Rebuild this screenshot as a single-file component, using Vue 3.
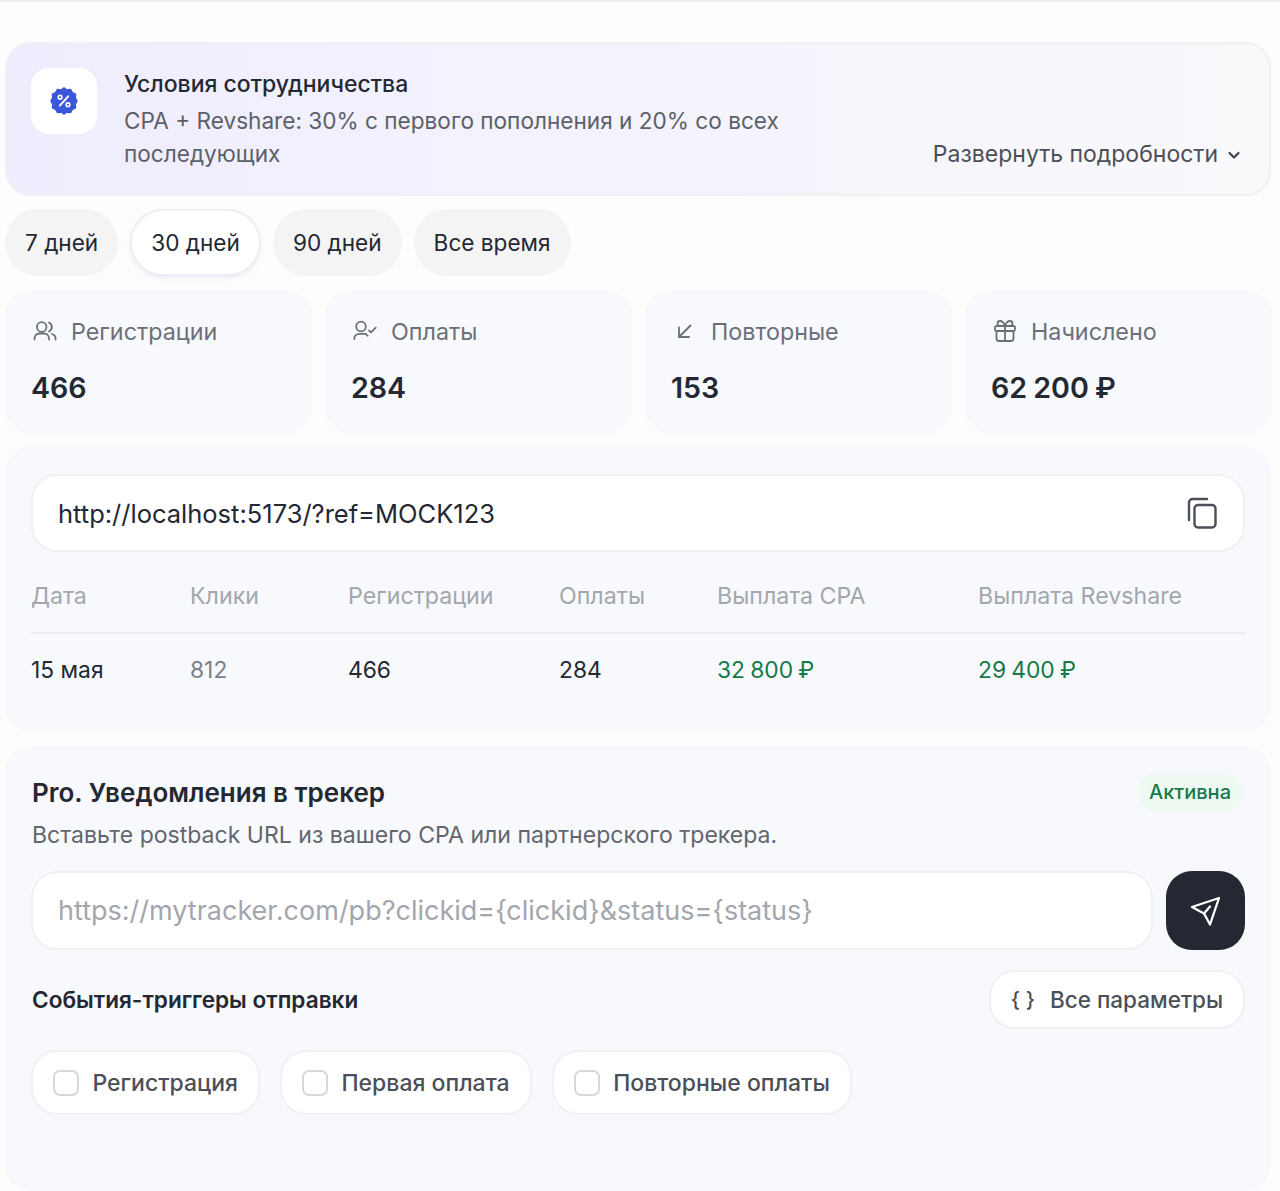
<script setup>
const periods = [
  { label: '7 дней' },
  { label: '30 дней', active: true },
  { label: '90 дней' },
  { label: 'Все время' }
]

const stats = [
  { key: 'users', label: 'Регистрации', value: '466' },
  { key: 'check', label: 'Оплаты', value: '284' },
  { key: 'arrow', label: 'Повторные', value: '153' },
  { key: 'gift', label: 'Начислено', value: '62 200 ₽' }
]

const triggers = ['Регистрация', 'Первая оплата', 'Повторные оплаты']
</script>

<template>
  <div class="page">
    <div class="terms">
      <div class="terms-icon">
        <svg width="28" height="30" viewBox="0 0 30 30">
          <path
            d="M15 1l3.200 2.200 3.800-.6 1.900 3.400 3.500 1.600-.4 3.800L29 15l-2 3.600.4 3.800-3.500 1.600-1.900 3.400-3.800-.6L15 29l-3.200-2.200-3.800.6-1.900-3.400-3.500-1.600.4-3.800L1 15l2-3.600-.4-3.800L6.100 6 8 2.600l3.800.6z"
            fill="#3b57d9"
            stroke="#3b57d9"
            stroke-width="1.500"
            stroke-linejoin="round"
          />
          <path d="M19.500 10L10.500 20" stroke="#fff" stroke-width="2" stroke-linecap="round" />
          <circle cx="10.800" cy="11" r="2" fill="none" stroke="#fff" stroke-width="1.700" />
          <circle cx="19.200" cy="19" r="2" fill="none" stroke="#fff" stroke-width="1.700" />
        </svg>
      </div>
      <div class="terms-text">
        <div class="terms-title">Условия сотрудничества</div>
        <div class="terms-desc">CPA + Revshare: 30% с первого пополнения и 20% со всех последующих</div>
      </div>
      <div class="terms-more">
        Развернуть подробности
        <svg width="14" height="14" viewBox="0 0 14 14" fill="none">
          <path d="M2.500 5l4.500 4.500L11.500 5" stroke="#3f444d" stroke-width="2.200" stroke-linecap="round" stroke-linejoin="round" />
        </svg>
      </div>
    </div>

    <div class="periods">
      <div
        v-for="p in periods"
        :key="p.label"
        class="period"
        :class="{ active: p.active }"
      >
        {{ p.label }}
      </div>
    </div>

    <div class="stats">
      <div v-for="s in stats" :key="s.key" class="stat">
        <div class="stat-label">
          <svg class="stat-icon" width="27" height="27" viewBox="0 0 27 27" fill="none" stroke="#6b7078" stroke-width="1.800" stroke-linecap="round" stroke-linejoin="round">
            <template v-if="s.key === 'users'">
              <circle cx="10.700" cy="9" r="4.800" />
              <path d="M3.500 21.500v-1a5 5 0 0 1 5-5h4.500a5 5 0 0 1 5 5v1" />
              <path d="M18 4.500a5 5 0 0 1 0 9" />
              <path d="M21 16a5 5 0 0 1 3.500 5.500" />
            </template>
            <template v-else-if="s.key === 'check'">
              <circle cx="10" cy="8.500" r="4.800" />
              <path d="M3.300 21v-.5a5 5 0 0 1 5-4.700h3.400a5 5 0 0 1 5 2" />
              <path d="M18 12.500l2 1.800 4.700-4.600" />
            </template>
            <template v-else-if="s.key === 'arrow'">
              <path d="M19.500 7.500L8 19" />
              <path d="M8 9.500V19h10" />
            </template>
            <template v-else>
              <rect x="4" y="8" width="20" height="5" rx="1.500" />
              <path d="M5.500 13v7.500a2.500 2.500 0 0 0 2.500 2.500h12a2.500 2.500 0 0 0 2.500-2.500V13" />
              <path d="M14 8v15" />
              <path d="M14 8c-1-3-3-5-5-5a2.500 2.500 0 0 0 0 5z" />
              <path d="M14 8c1-3 3-5 5-5a2.500 2.500 0 0 1 0 5z" />
            </template>
          </svg>
          <span>{{ s.label }}</span>
        </div>
        <div class="stat-value">{{ s.value }}</div>
      </div>
    </div>

    <div class="panel link-panel">
      <div class="field link-field">
        <span>http://localhost:5173/?ref=MOCK123</span>
        <svg width="32" height="32" viewBox="0 0 32 32" fill="none" stroke="#4b5058" stroke-width="2.400" stroke-linecap="round" stroke-linejoin="round">
          <rect x="8.500" y="8" width="21" height="22.500" rx="3.500" />
          <path d="M3 23V5.500A3.500 3.500 0 0 1 6.500 2H21" />
        </svg>
      </div>
      <table class="report">
        <thead>
          <tr>
            <th class="c1">Дата</th>
            <th class="c2">Клики</th>
            <th class="c3">Регистрации</th>
            <th class="c4">Оплаты</th>
            <th class="c5">Выплата CPA</th>
            <th>Выплата Revshare</th>
          </tr>
        </thead>
        <tbody>
          <tr>
            <td>15 мая</td>
            <td class="muted">812</td>
            <td>466</td>
            <td>284</td>
            <td class="money">32 800 ₽</td>
            <td class="money">29 400 ₽</td>
          </tr>
        </tbody>
      </table>
    </div>

    <div class="panel pro-panel">
      <div class="pro-head">
        <div class="pro-title">Pro. Уведомления в трекер</div>
        <div class="badge">Активна</div>
      </div>
      <div class="pro-desc">Вставьте postback URL из вашего CPA или партнерского трекера.</div>

      <div class="pro-row">
        <div class="field url-field">https://mytracker.com/pb?clickid={clickid}&amp;status={status}</div>
        <div class="send-btn">
          <svg width="32" height="32" viewBox="0 0 32 32" fill="none" stroke="#fff" stroke-width="2.300" stroke-linecap="round" stroke-linejoin="round">
            <path d="M29 3L2 12l12 6.500 6 11z" />
            <path d="M14 18.500l6-7" />
          </svg>
        </div>
      </div>

      <div class="events-head">
        <div class="events-title">События-триггеры отправки</div>
        <div class="params-btn">
          <span class="braces">{ }</span>
          Все параметры
        </div>
      </div>

      <div class="triggers">
        <label v-for="t in triggers" :key="t" class="trigger">
          <span class="box"></span>
          {{ t }}
        </label>
      </div>
    </div>
  </div>
</template>

<style>
html, body {
  margin: 0;
  background: #fdfdfe;
}
</style>

<style scoped>
.page {
  box-sizing: border-box;
  width: 1280px;
  height: 1191px;
  overflow: hidden;
  padding: 42px 9px 0 5px;
  border-top: 2px solid #eef0f4;
  display: flex;
  flex-direction: column;
  gap: 13px;
  font-family: Inter, "Noto Sans", sans-serif;
  color: #232833;
}

.terms {
  display: flex;
  align-items: flex-start;
  box-sizing: border-box;
  height: 154px;
  margin-top: -2px;
  padding: 24px 28px 0 24px;
  background: linear-gradient(90deg, #efedfd, #f9f9fc);
  border: 2px solid #f0f0f5;
  border-radius: 26px;
}

.terms-icon {
  flex: none;
  width: 66px;
  height: 66px;
  border-radius: 18px;
  background: #fff;
  display: flex;
  align-items: center;
  justify-content: center;
}

.terms-text {
  width: 680px;
  margin-left: 27px;
}

.terms-title {
  font-size: 23px;
  font-weight: 500;
  line-height: 32px;
}

.terms-desc {
  margin-top: 4px;
  font-size: 22.600px;
  line-height: 33px;
  color: #5c6068;
}

.terms-more {
  margin-left: auto;
  align-self: flex-end;
  margin-bottom: 23px;
  display: flex;
  align-items: center;
  gap: 9px;
  font-size: 23px;
  line-height: 33px;
  color: #4b4f57;
}

.periods {
  display: flex;
  gap: 12px;
  margin-bottom: 1px;
}

.period {
  box-sizing: border-box;
  height: 67px;
  padding: 0 20px;
  border-radius: 34px;
  background: #f4f4f5;
  display: flex;
  align-items: center;
  font-size: 22.600px;
  color: #232833;
}

.period.active {
  padding: 0 19px;
  background: #fff;
  border: 2px solid #eeeef6;
  box-shadow: 0 2px 5px rgba(30, 40, 70, 0.08);
}

.stats {
  display: grid;
  grid-template-columns: repeat(4, 307px);
  gap: 13px;
}

.stat {
  box-sizing: border-box;
  height: 144px;
  padding: 26px 26px 0;
  background: #f8f9fc;
  border-radius: 26px;
}

.stat-label {
  display: flex;
  align-items: center;
  gap: 13px;
  height: 30px;
  font-size: 23.300px;
  color: #6b7078;
}

.stat-icon {
  flex: none;
}

.stat-value {
  margin-top: 24px;
  font-size: 28.600px;
  font-weight: 600;
  line-height: 36px;
  word-spacing: -1px;
}

.panel {
  box-sizing: border-box;
  background: #f8f9fc;
  border-radius: 26px;
  padding: 27px 26px 0;
}

.link-panel {
  height: 285px;
  margin-bottom: 1px;
}

.field {
  box-sizing: border-box;
  height: 78px;
  background: #fff;
  border: 2px solid #f0f1f4;
  border-radius: 26px;
  display: flex;
  align-items: center;
  padding: 0 25px;
  font-size: 25.500px;
}

.link-field {
  justify-content: space-between;
  color: #232833;
}

.report {
  width: 100%;
  border-collapse: collapse;
  table-layout: fixed;
  font-size: 22.800px;
}

.report th {
  box-sizing: border-box;
  height: 81px;
  padding: 7px 0 0;
  text-align: left;
  font-size: 23.200px;
  font-weight: 400;
  color: #a3a6ad;
  border-bottom: 2px solid #edeef2;
}

.report td {
  height: 70px;
  padding: 0;
  color: #232833;
}

.c1 {
  width: 159px;
}

.c2 {
  width: 158px;
}

.c3 {
  width: 211px;
}

.c4 {
  width: 158px;
}

.c5 {
  width: 261px;
}

.report td.muted {
  color: #7c8087;
}

.report td.money {
  color: #147a48;
  word-spacing: -1.200px;
}

.pro-panel {
  height: 445px;
  padding-top: 26px;
}

.pro-head {
  display: flex;
  align-items: center;
  justify-content: space-between;
  height: 40px;
}

.pro-title {
  margin-left: 1px;
  font-size: 26px;
  font-weight: 600;
}

.badge {
  box-sizing: border-box;
  height: 37px;
  margin-right: 2px;
  padding: 0 12px;
  border-radius: 19px;
  background: #eef9f1;
  display: flex;
  align-items: center;
  font-size: 20px;
  font-weight: 500;
  color: #147a48;
}

.pro-desc {
  margin: 7px 0 0 1px;
  font-size: 23.050px;
  line-height: 32px;
  color: #62666e;
}

.pro-row {
  display: flex;
  gap: 13px;
  margin-top: 20px;
}

.url-field {
  flex: 1;
  height: 79px;
  font-size: 27px;
  color: #a3a6ad;
}

.send-btn {
  flex: none;
  width: 79px;
  height: 79px;
  border-radius: 26px;
  background: #232833;
  display: flex;
  align-items: center;
  justify-content: center;
}

.events-head {
  display: flex;
  align-items: center;
  justify-content: space-between;
  margin-top: 20px;
}

.events-title {
  margin-left: 1px;
  font-size: 22.600px;
  font-weight: 600;
}

.params-btn {
  box-sizing: border-box;
  height: 59px;
  padding: 0 20px;
  background: #fff;
  border: 2px solid #f0f1f4;
  border-radius: 26px;
  display: flex;
  align-items: center;
  gap: 15px;
  font-size: 22.500px;
  font-weight: 500;
  color: #4b4f57;
}

.braces {
  font-size: 21px;
  font-weight: 500;
}

.triggers {
  display: flex;
  gap: 20px;
  margin-top: 21px;
}

.trigger {
  box-sizing: border-box;
  height: 65px;
  padding: 0 20px;
  background: #fff;
  border: 2px solid #f0f1f4;
  border-radius: 26px;
  display: flex;
  align-items: center;
  gap: 13.500px;
  font-size: 23px;
  font-weight: 500;
  color: #4b4f57;
}

.box {
  box-sizing: border-box;
  width: 26px;
  height: 26px;
  border: 2px solid #d6d7da;
  border-radius: 7px;
  background: #fff;
}
</style>
